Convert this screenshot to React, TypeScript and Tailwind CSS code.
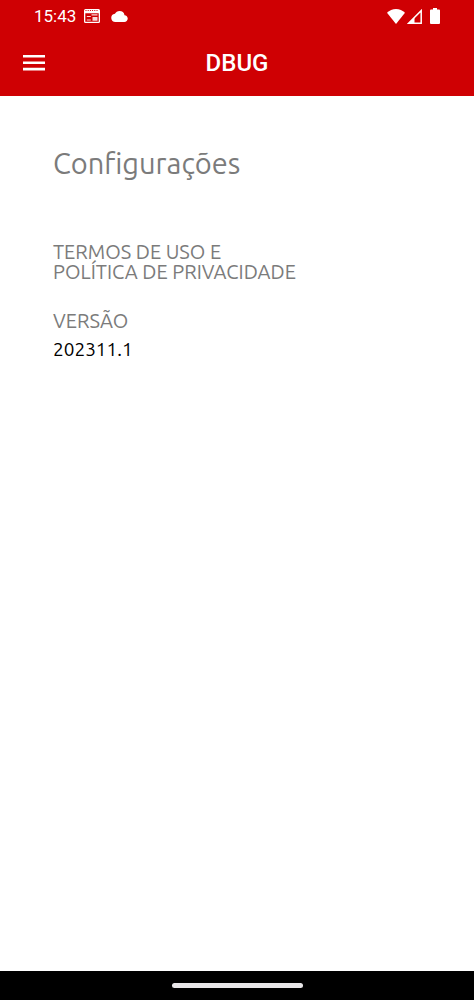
const NewsIcon = () => (
    <svg viewBox="0 0 16 14" className="h-3.5 w-4" aria-hidden="true">
        <path fill="currentColor" fillRule="evenodd" d="M1.500 0h13A1.500 1.500 0 0 1 16 1.500v11a1.500 1.500 0 0 1-1.500 1.500h-13A1.500 1.500 0 0 1 0 12.500v-11A1.500 1.500 0 0 1 1.500 0ZM1.300 4.300v8.400h13.400V4.300Z" />
        <path stroke="#cf0003" strokeWidth="1" d="M1.500 1.500h13" strokeDasharray="1 1.200" />
        <path fill="currentColor" opacity="0.850" d="M7.500 5.300h6v1.200h-6ZM2.800 7h4v1h-4ZM2.800 10.500h4v1h-4ZM8.500 8h5v3.800h-5Z" />
    </svg>
);

const CloudIcon = () => (
    <svg viewBox="0 0 24 16" className="h-[11px] w-[17px]" fill="currentColor" aria-hidden="true">
        <path d="M19.350 6.040A7.490 7.490 0 0 0 12 0C9.110 0 6.600 1.640 5.350 4.040A5.994 5.994 0 0 0 0 10c0 3.310 2.690 6 6 6h13c2.760 0 5-2.240 5-5 0-2.640-2.050-4.780-4.650-4.960Z" />
    </svg>
);

const WifiIcon = () => (
    <svg viewBox="0 0 18 15" className="h-[15px] w-[18px]" fill="currentColor" aria-hidden="true">
        <path d="M0 3.800C2.400 1.500 5.600 0 9 0s6.600 1.500 9 3.800L9 15Z" />
    </svg>
);

const SignalIcon = () => (
    <svg viewBox="0 0 15 15" className="h-[15px] w-[15px]" aria-hidden="true">
        <path d="M1.600 14.200 14.200 1.600v12.600Z" fill="none" stroke="currentColor" strokeWidth="1.500" />
        <path d="M1 14.500 7.500 8v6.500Z" fill="currentColor" />
    </svg>
);

const BatteryIcon = () => (
    <svg viewBox="0 0 10 16" className="h-4 w-2.5" fill="currentColor" aria-hidden="true">
        <path d="M3 0h4v1.600h2a1 1 0 0 1 1 1V15a1 1 0 0 1-1 1H1a1 1 0 0 1-1-1V2.600a1 1 0 0 1 1-1h2Z" />
    </svg>
);

const StatusBar = () => (
    <div className="flex h-8 items-center justify-between px-[34px]">
        <div className="flex items-center gap-2">
            <span className="text-[17px] leading-5">15:43</span>
            <NewsIcon />
            <span className="pl-[3px]">
                <CloudIcon />
            </span>
        </div>
        <div className="flex items-center gap-0.5">
            <WifiIcon />
            <SignalIcon />
            <span className="pl-1.5">
                <BatteryIcon />
            </span>
        </div>
    </div>
);

const AppBar = () => (
    <div className="grid h-[62px] grid-cols-[1fr_auto_1fr] items-center px-[22px]">
        <button type="button" aria-label="Menu" className="w-fit">
            <svg viewBox="0 0 23 16" className="h-4 w-[23px]" fill="currentColor" aria-hidden="true">
                <path d="M1 0h22v2.600H1ZM1 6.400h22V9H1ZM1 12.800h22v2.600H1Z" />
            </svg>
        </button>
        <h1 className="text-2xl font-medium">DBUG</h1>
    </div>
);

export default function App() {
    return (
        <div className="flex min-h-screen flex-col bg-white">
            <header className="bg-[#cf0003] pb-0.5 font-['Roboto',sans-serif] text-white">
                <StatusBar />
                <AppBar />
            </header>

            <main className="flex-1 px-[53px] pt-[47px] font-['Ubuntu','Noto_Sans',sans-serif] text-[#7b7b7b]">
                <h2 className="text-[29px] leading-10">Configurações</h2>
                <a href="#termos" className="mt-[59px] block text-xl leading-5">
                    TERMOS DE USO E
                    <br />
                    POLÍTICA DE PRIVACIDADE
                </a>
                <dl className="mt-6 leading-[29px]">
                    <dt className="text-xl leading-[29px]">VERSÃO</dt>
                    <dd className="text-[19px] text-black">202311.1</dd>
                </dl>
            </main>

            <footer className="flex h-[29px] items-center justify-center bg-black">
                <div className="h-[5px] w-[131px] rounded-full bg-[#e8e6e8]" />
            </footer>
        </div>
    );
}
